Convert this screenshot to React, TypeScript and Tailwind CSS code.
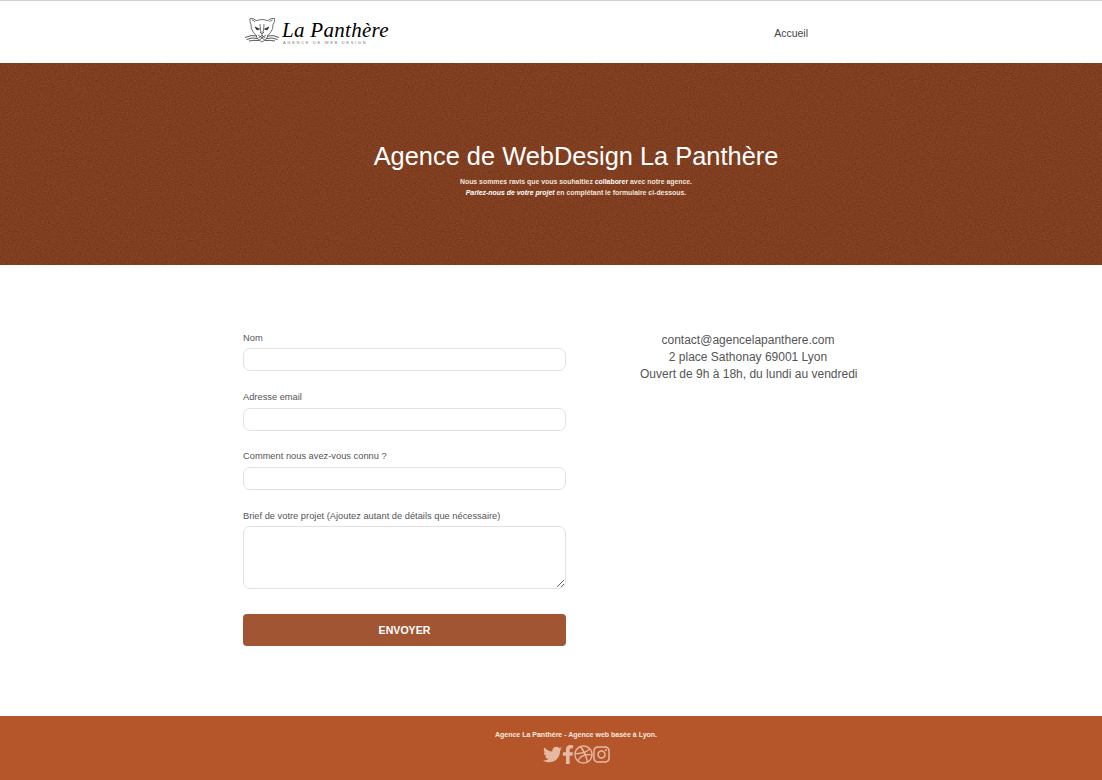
import { FaDribbble, FaFacebookF, FaInstagram, FaTwitter } from "react-icons/fa";

function PantherLogo() {
  return (
    <svg width="34" height="28" viewBox="0 0 34 28" fill="none" stroke="#333" strokeWidth="0.7">
      {/* ears + head */}
      <path d="M5 2.5 Q9 2 11 4.5 Q17 2.5 23 4.5 Q26 1.5 29.5 2.5 Q30 6 28 8.5 Q28.5 13 25.5 16.5 Q22.5 19 21.5 23 L17 26 L12.5 23 Q11.5 19 8.5 16.5 Q5.5 13 6 8.5 Q4.5 6 5 2.5 Z" />
      <path d="M7 4 Q9 4 10 6 M27.5 4 Q25.5 4 24.5 6" />
      {/* eyes */}
      <path d="M10 11 L14.5 13 L12 14 Z M24 11 L19.5 13 L22 14 Z" fill="#222" />
      {/* nose + muzzle */}
      <path d="M15 8 L15.5 15 M19 8 L18.5 15 M15 16 L17 18 L19 16 Z" />
      <path d="M17 18 V20.5 M13 19 L21 25 M21 19 L13 25 M13.5 22 L17 19.5 L20.5 22" />
      {/* whiskers */}
      <g stroke="#444" strokeWidth="0.9">
        <path d="M0 21.5 Q6 18.5 12 20 M1.5 23.5 Q7 21 12.5 22.5 M4 25 Q9 24 13 24.5" />
        <path d="M34 21.5 Q28 18.5 22 20 M32.5 23.5 Q27 21 21.5 22.5 M30 25 Q25 24 21 24.5" />
      </g>
    </svg>
  );
}

function Field({ label, className, gap }: { label: string; className: string; gap: string }) {
  return (
    <div className={className}>
      <label className="block text-[9.3px] leading-[14px] text-[#555]">{label}</label>
      <input className={`${gap} block h-[23px] w-full rounded-[7px] border border-[#e2e2e2] bg-white`} />
    </div>
  );
}

export default function App() {
  return (
    <div className="min-h-[780px] bg-white font-['Liberation_Sans',Arial,sans-serif] text-[#444]">
      <header className="h-[63px] border-t border-[#cfcfcf] bg-white">
        <div className="mx-auto flex h-full w-[616px] items-center justify-between pl-[2px] pr-[51px]">
          <div className="relative flex -translate-y-[2px] items-center gap-[3px]">
            <PantherLogo />
            <span className="font-['Liberation_Serif',serif] text-[21px] italic leading-none tracking-[0.3px] text-black">
              La Panthère
            </span>
            <span className="absolute left-[38px] top-[25px] text-[4px] leading-none tracking-[1.7px] text-[#777]">
              AGENCE DE WEB DESIGN
            </span>
          </div>
          <a className="translate-y-[2px] text-[10.5px] text-[#444]">Accueil</a>
        </div>
      </header>

      <section className="relative flex h-[202px] flex-col items-center overflow-hidden bg-[#874323] pl-[50px] pt-[78px] text-white">
        {/* linen texture */}
        <svg className="absolute inset-0 h-full w-full opacity-[0.28]" aria-hidden="true">
          <filter id="linen" x="0" y="0" width="100%" height="100%" colorInterpolationFilters="sRGB">
            <feTurbulence type="fractalNoise" baseFrequency="0.6 0.85" numOctaves="2" seed="4" />
            <feColorMatrix values="0 0 0 0 0.25  0 0 0 0 0.09  0 0 0 0 0.03  1.6 1.6 0 0 -1.25" />
          </filter>
          <rect width="100%" height="100%" filter="url(#linen)" />
        </svg>
        <h1 className="relative text-[25.4px] leading-[30px]">Agence de WebDesign La Panthère</h1>
        <p className="relative mt-[5px] text-center text-[6.9px] font-bold leading-[11px] text-[#f3e3da]">
          Nous sommes ravis que vous souhaitiez <span className="text-white">collaborer</span> avec notre agence.
          <br />
          <em className="text-white">Parlez-nous de votre projet</em> en complétant le formulaire ci-dessous.
        </p>
      </section>

      <main className="mx-auto flex h-[451px] w-[616px] pt-[66px]">
        <form className="w-[323px]">
          <Field label="Nom" className="" gap="mt-[3px]" />
          <Field label="Adresse email" className="mt-[19px]" gap="mt-[4px]" />
          <Field label="Comment nous avez-vous connu ?" className="mt-[18px]" gap="mt-[4px]" />
          <div className="mt-[19px]">
            <label className="block text-[9.3px] leading-[14px] text-[#555]">
              Brief de votre projet (Ajoutez autant de détails que nécessaire)
            </label>
            <textarea className="mt-[3px] block h-[63px] w-full rounded-[7px] border border-[#e2e2e2] bg-white" />
          </div>
          <button
            type="button"
            className="mt-[25px] h-[32px] w-full rounded-[4px] bg-[#a15532] pt-[1px] text-[10.6px] font-bold text-white"
          >
            ENVOYER
          </button>
        </form>
        <div className="ml-[74px] mt-[1px] w-[216px] text-center text-[12px] leading-[17px] whitespace-nowrap text-[#555]">
          <p>contact@agencelapanthere.com</p>
          <p>2 place Sathonay 69001 Lyon</p>
          <p>Ouvert de 9h à 18h, du lundi au vendredi</p>
        </div>
      </main>

      <footer className="flex h-[64px] flex-col items-center bg-[#b4562a] pl-[50px] pt-[14px]">
        <p className="text-[7px] font-bold leading-[10px] text-[#f8e8df]">Agence La Panthère - Agence web basée à Lyon.</p>
        <div className="mt-[5px] flex items-center text-[#e6b9a3]">
          <FaTwitter className="h-[19px] w-[19px]" />
          <FaFacebookF className="h-[19px] w-[12px]" />
          <FaDribbble className="h-[19px] w-[19px]" />
          <FaInstagram className="h-[19px] w-[17px]" />
        </div>
      </footer>
    </div>
  );
}
